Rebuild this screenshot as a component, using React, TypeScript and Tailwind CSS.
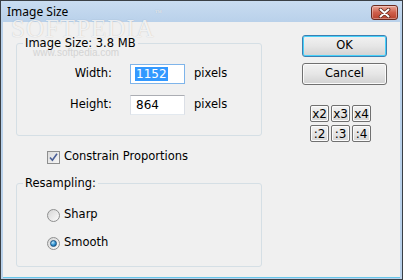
import React from 'react';

const body = { fontFamily: '"DejaVu Sans", Verdana, sans-serif' };

function CloseButton() {
  return (
    <div className="w-[27px] h-[15px] rounded-[3px] border border-[#6b2a1f] bg-gradient-to-b from-[#e8a597] via-[#cf5f4b] to-[#b8402b] flex items-center justify-center shadow-[inset_0_0_0_1px_rgba(255,255,255,0.35)]">
      <svg width="13" height="10" viewBox="0 0 13 10">
        <path d="M2.5 1.5 L10.5 8.5 M10.5 1.5 L2.5 8.5" stroke="#5a2418" strokeWidth="3.6" strokeLinecap="round" />
        <path d="M2.5 1.5 L10.5 8.5 M10.5 1.5 L2.5 8.5" stroke="#ffffff" strokeWidth="2" strokeLinecap="round" />
      </svg>
    </div>
  );
}

function PushButton({ label, isDefault }: { label: string; isDefault?: boolean }) {
  return (
    <button
      className={
        'w-[85px] h-[22px] rounded-[3px] border bg-gradient-to-b from-[#f2f2f2] via-[#e6e6e6] to-[#d2d2d2] text-[11.5px] text-black leading-none ' +
        (isDefault
          ? 'border-[#3c7fb1] shadow-[inset_0_0_0_1px_#48d1fa]'
          : 'border-[#707070] shadow-[inset_0_0_0_1px_#fbfbfb]')
      }
      style={body}
    >
      {label}
    </button>
  );
}

function SmallButton({ label }: { label: string }) {
  return (
    <button
      className="w-[19px] h-[17px] rounded-[2px] border border-[#707070] bg-gradient-to-b from-[#f4f4f4] to-[#d6d6d6] shadow-[inset_0_0_0_1px_#fbfbfb] text-[12px] text-black leading-none flex items-center justify-center"
      style={body}
    >
      {label}
    </button>
  );
}

function Checkbox() {
  return (
    <div className="w-[13px] h-[13px] border border-[#8e8f8f] bg-gradient-to-br from-[#dcdcdc] to-[#f6f6f6] flex items-center justify-center">
      <svg width="9" height="9" viewBox="0 0 9 9">
        <path d="M1 4.5 L3.4 7.3 L8 0.8" fill="none" stroke="#4a5f97" strokeWidth="1.6" />
      </svg>
    </div>
  );
}

function Radio({ checked }: { checked?: boolean }) {
  return (
    <div className="w-[13px] h-[13px] rounded-full border border-[#8e8f8f] bg-gradient-to-br from-[#d6d6d6] to-[#fbfbfb] flex items-center justify-center">
      {checked && (
        <div className="w-[7px] h-[7px] rounded-full bg-[radial-gradient(circle_at_35%_30%,#bfe7fb,#2a8fd0_55%,#0e4f86)] border border-[#1c5180]" />
      )}
    </div>
  );
}

function FieldRow({ label, value, focused }: { label: string; value: string; focused?: boolean }) {
  return (
    <div className="flex items-center h-[20px]">
      <span className="w-[95px] text-right">{label}</span>
      <div
        className={
          'ml-[18px] w-[55px] h-[20px] bg-white border flex items-center pl-[4px] text-[12px] ' +
          (focused ? 'border-[#7eb4ea]' : 'border-[#abadb3] border-b-[#e3e9ef] border-x-[#dbdfe6]')
        }
      >
        {focused ? <span className="bg-[#3399ff] text-white leading-[14px] px-[1px]">{value}</span> : <span className="px-[1px]">{value}</span>}
      </div>
      <span className="ml-[9px]">pixels</span>
    </div>
  );
}

export default function App() {
  return (
    <div className="relative w-[403px] h-[280px] border border-[#3a3f45] bg-[#b9d1ea] flex flex-col overflow-hidden">
      {/* title bar */}
      <div className="h-[21px] flex items-start justify-between bg-gradient-to-b from-[#c9dcf1] to-[#b9d1ea]">
        <span
          className="ml-[6px] mt-[3px] text-[12px] leading-[15px] text-black"
          style={{ fontFamily: '"Noto Sans", "Open Sans", sans-serif' }}
        >
          Image Size
        </span>
        <div className="mt-[4px] mr-[4px]">
          <CloseButton />
        </div>
      </div>

      {/* client area */}
      <div className="flex-1 mx-[2px] mb-[2px] bg-[#f0f0f0] flex text-[11.5px] text-black shadow-[0_1px_0_0_#66c6ea]" style={body}>
        <div className="ml-[13px] pt-[14px] w-[246px] flex flex-col">
          <fieldset className="border border-[#d5dfe5] rounded-[3px] pt-[14px] pb-[20px]">
            <legend className="ml-[6px] px-[2px] leading-[14px]">Image Size: 3.8 MB</legend>
            <div className="flex flex-col gap-[11px]">
              <FieldRow label="Width:" value="1152" focused />
              <FieldRow label="Height:" value="864" />
            </div>
          </fieldset>

          <div className="mt-[14px] ml-[31px] h-[14px] flex items-center gap-[4px]">
            <Checkbox />
            <span>Constrain Proportions</span>
          </div>

          <fieldset className="mt-[12px] border border-[#d5dfe5] rounded-[3px] pt-[18px] pb-[16px]">
            <legend className="ml-[6px] px-[2px] leading-[14px]">Resampling:</legend>
            <div className="pl-[30px] flex flex-col gap-[14px]">
              <div className="h-[14px] flex items-center gap-[4px]">
                <Radio />
                <span>Sharp</span>
              </div>
              <div className="h-[14px] flex items-center gap-[4px]">
                <Radio checked />
                <span>Smooth</span>
              </div>
            </div>
          </fieldset>
        </div>

        <div className="ml-[40px] pt-[13px] flex flex-col">
          <PushButton label="OK" isDefault />
          <div className="mt-[6px]">
            <PushButton label="Cancel" />
          </div>
          <div className="mt-[20px] ml-[8px] grid grid-cols-3 gap-x-[2px] gap-y-[3px] w-[61px]">
            <SmallButton label="x2" />
            <SmallButton label="x3" />
            <SmallButton label="x4" />
            <SmallButton label=":2" />
            <SmallButton label=":3" />
            <SmallButton label=":4" />
          </div>
        </div>
      </div>

      {/* watermark */}
      <div
        className="absolute left-[10px] top-[15px] pointer-events-none text-[25px] leading-none tracking-[1px] text-white/80 [text-shadow:0_0_1px_rgba(0,0,0,0.25)]"
        style={{ fontFamily: '"Liberation Serif", serif' }}
      >
        SOFTPEDIA<sup className="text-[7px] align-top">™</sup>
      </div>
      <div
        className="absolute left-[32px] top-[47px] pointer-events-none text-[10px] leading-none text-[#d4d4d4]"
        style={{ fontFamily: '"Liberation Sans", sans-serif' }}
      >
        www.softpedia.com
      </div>
    </div>
  );
}
